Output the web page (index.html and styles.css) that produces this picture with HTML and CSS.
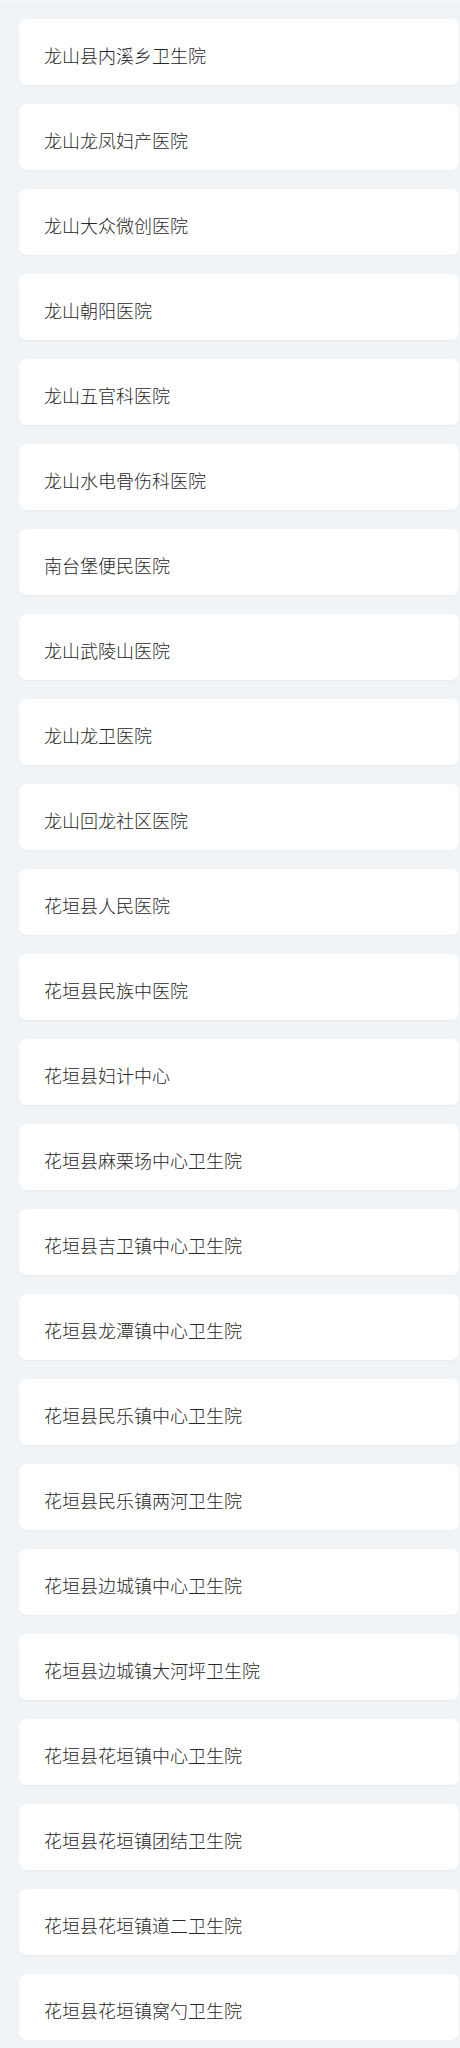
FILE: index.html
```html
<!DOCTYPE html>
<html lang="zh-CN">
<head>
<meta charset="utf-8">
<title>医院列表</title>
<link rel="stylesheet" href="styles.css">
</head>
<body>
<div class="topbar"></div>
<ul class="list">
<li class="item">龙山县内溪乡卫生院</li>
<li class="item">龙山龙凤妇产医院</li>
<li class="item">龙山大众微创医院</li>
<li class="item">龙山朝阳医院</li>
<li class="item">龙山五官科医院</li>
<li class="item">龙山水电骨伤科医院</li>
<li class="item">南台堡便民医院</li>
<li class="item">龙山武陵山医院</li>
<li class="item">龙山龙卫医院</li>
<li class="item">龙山回龙社区医院</li>
<li class="item">花垣县人民医院</li>
<li class="item">花垣县民族中医院</li>
<li class="item">花垣县妇计中心</li>
<li class="item">花垣县麻栗场中心卫生院</li>
<li class="item">花垣县吉卫镇中心卫生院</li>
<li class="item">花垣县龙潭镇中心卫生院</li>
<li class="item">花垣县民乐镇中心卫生院</li>
<li class="item">花垣县民乐镇两河卫生院</li>
<li class="item">花垣县边城镇中心卫生院</li>
<li class="item">花垣县边城镇大河坪卫生院</li>
<li class="item">花垣县花垣镇中心卫生院</li>
<li class="item">花垣县花垣镇团结卫生院</li>
<li class="item">花垣县花垣镇道二卫生院</li>
<li class="item">花垣县花垣镇窝勺卫生院</li>
</ul>
</body>
</html>
```

FILE: styles.css
```css
html, body {
  margin: 0;
  padding: 0;
  background: #f0f4f7;
}
body {
  font-family: "Noto Sans CJK SC", "Noto Sans", sans-serif;
}
.topbar {
  height: 5px;
  background: linear-gradient(#f6f8fa, #eef2f5);
}
.list {
  list-style: none;
  margin: 0;
  padding: 14px 1px 0 19px;
  display: flex;
  flex-direction: column;
  gap: 19px;
}
.item {
  height: 66px;
  box-sizing: border-box;
  background: #ffffff;
  border-radius: 8px;
  box-shadow: 0 1px 2px rgba(0, 0, 0, 0.04);
  padding: 5px 0 0 25px;
  display: flex;
  align-items: center;
  font-size: 18px;
  font-weight: 300;
  color: #262626;
  line-height: 1;
}
```
